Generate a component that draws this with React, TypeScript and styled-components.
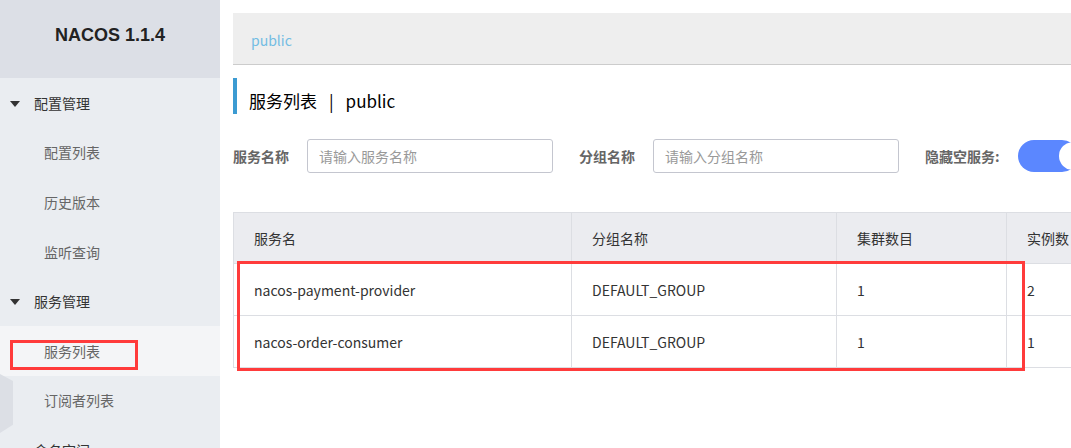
import React from "react"
import styled, { createGlobalStyle } from "styled-components"

const GlobalStyle = createGlobalStyle`
  html, body {
    margin: 0;
    padding: 0;
    background: #fff;
    font-family: "Noto Sans CJK SC", "Noto Sans", sans-serif;
    font-size: 14px;
    color: #333;
  }
  * { box-sizing: border-box; }
`

const Page = styled.div`
  display: flex;
  width: 100vw;
  height: 100vh;
  overflow: hidden;
`

const Sidebar = styled.aside`
  position: relative;
  flex: 0 0 220px;
  background: #eaedf1;
  display: flex;
  flex-direction: column;
  overflow: hidden;
`

const Brand = styled.div`
  flex-shrink: 0;
  height: 78px;
  background: #dcdfe6;
  display: flex;
  align-items: center;
  justify-content: center;
  font-family: "Liberation Sans", Arial, sans-serif;
  font-weight: bold;
  font-size: 18px;
  color: #222;
  padding-bottom: 8px;
`

const Menu = styled.ul`
  flex-shrink: 0;
  list-style: none;
  margin: 0;
  padding: 0;
`

const MenuItem = styled.li<{ $sub?: boolean; $active?: boolean }>`
  position: relative;
  height: 49.6px;
  display: flex;
  align-items: center;
  padding-left: ${(p) => (p.$sub ? "44px" : "34px")};
  font-size: 14px;
  color: ${(p) => (p.$sub ? "#666" : "#333")};
  background: ${(p) => (p.$active ? "#f4f5f7" : "transparent")};
`

const Arrow = styled.span`
  position: absolute;
  left: 10px;
  top: 50%;
  margin-top: -2px;
  width: 0;
  height: 0;
  border-left: 5px solid transparent;
  border-right: 5px solid transparent;
  border-top: 6px solid #333;
`

const Mark = styled.span`
  position: absolute;
  left: 10px;
  top: 14px;
  width: 128px;
  height: 30px;
  border: 3px solid #ff3b3b;
`

const Handle = styled.div`
  position: absolute;
  left: 0;
  top: 374px;
  width: 13px;
  height: 59px;
  background: #dcdfe5;
  clip-path: polygon(0 0, 100% 12%, 100% 86%, 0 100%);
`

const Main = styled.main`
  flex: 1;
  min-width: 0;
  overflow: hidden;
  padding: 13px 0 0 13px;
`

const Content = styled.div`
  width: 1000px;
`

const Breadcrumb = styled.div`
  height: 52px;
  background: #eeeeee;
  border-bottom: 1px solid #cccccc;
  display: flex;
  align-items: center;
  padding-left: 18px;
  padding-top: 3px;
  color: #73bde3;
  font-size: 14px;
`

const Title = styled.h1`
  margin: 13px 0 0;
  height: 36px;
  border-left: 4px solid #3c9bd2;
  padding: 10px 0 0 12px;
  font-size: 17px;
  font-weight: normal;
  line-height: 26px;
  color: #000;
  display: flex;
`

const Separator = styled.span`
  margin: 0 12px;
`

const Filters = styled.div`
  margin-top: 25px;
  display: flex;
  align-items: center;
  height: 34px;
`

const Field = styled.div`
  display: flex;
  align-items: center;
  margin-right: 26px;
`

const Label = styled.label`
  font-weight: bold;
  font-size: 14px;
  color: #666;
  margin-right: 18px;
  white-space: nowrap;
`

const Input = styled.input`
  width: 246px;
  height: 34px;
  border: 1px solid #c4c6cf;
  border-radius: 3px;
  padding: 0 11px;
  font-family: inherit;
  font-size: 14px;
  color: #333;
  outline: none;
  &::placeholder {
    color: #999;
  }
`

const Switch = styled.span`
  position: relative;
  width: 60px;
  height: 32px;
  border-radius: 16px;
  background: #5b87ff;
  &::after {
    content: "";
    position: absolute;
    top: 2px;
    left: 41px;
    width: 28px;
    height: 28px;
    border-radius: 50%;
    background: #fff;
  }
`

const TableWrap = styled.div`
  position: relative;
  margin-top: 39px;
`

const Table = styled.table`
  border-collapse: collapse;
  table-layout: fixed;
  width: 1000px;
  border: 1px solid #dcdee3;
`

const Th = styled.th<{ $w: number }>`
  width: ${(p) => p.$w}px;
  height: 51px;
  background: #ebecf0;
  border: 1px solid #dcdee3;
  text-align: left;
  padding: 0 20px;
  font-weight: normal;
  font-size: 14px;
  color: #333;
`

const Td = styled.td`
  height: 52px;
  border: 1px solid #dcdee3;
  padding: 0 20px;
  font-size: 14px;
  color: #333;
  white-space: nowrap;
`

const Highlight = styled.div`
  position: absolute;
  left: 4px;
  top: 49px;
  width: 788px;
  height: 110px;
  border: 3px solid #ff3b3b;
  pointer-events: none;
`

const menu = [
  { label: "配置管理", group: true },
  { label: "配置列表" },
  { label: "历史版本" },
  { label: "监听查询" },
  { label: "服务管理", group: true },
  { label: "服务列表", active: true },
  { label: "订阅者列表" },
  { label: "命名空间", top: true },
]

const rows = [
  { name: "nacos-payment-provider", group: "DEFAULT_GROUP", clusters: 1, instances: 2 },
  { name: "nacos-order-consumer", group: "DEFAULT_GROUP", clusters: 1, instances: 1 },
]

export default function App() {
  return (
    <Page>
      <GlobalStyle />
      <Sidebar>
        <Brand>NACOS 1.1.4</Brand>
        <Menu>
          {menu.map((m) => (
            <MenuItem key={m.label} $sub={!m.group && !m.top} $active={m.active}>
              {m.group && <Arrow />}
              {m.active && <Mark />}
              {m.label}
            </MenuItem>
          ))}
        </Menu>
        <Handle />
      </Sidebar>
      <Main>
        <Content>
          <Breadcrumb>public</Breadcrumb>
          <Title>
            服务列表<Separator>|</Separator>public
          </Title>
          <Filters>
            <Field>
              <Label>服务名称</Label>
              <Input placeholder="请输入服务名称" />
            </Field>
            <Field>
              <Label>分组名称</Label>
              <Input placeholder="请输入分组名称" />
            </Field>
            <Field>
              <Label>隐藏空服务:</Label>
              <Switch />
            </Field>
          </Filters>
          <TableWrap>
            <Table>
              <thead>
                <tr>
                  <Th $w={338}>服务名</Th>
                  <Th $w={265}>分组名称</Th>
                  <Th $w={170}>集群数目</Th>
                  <Th $w={227}>实例数</Th>
                </tr>
              </thead>
              <tbody>
                {rows.map((r) => (
                  <tr key={r.name}>
                    <Td>{r.name}</Td>
                    <Td>{r.group}</Td>
                    <Td>{r.clusters}</Td>
                    <Td>{r.instances}</Td>
                  </tr>
                ))}
              </tbody>
            </Table>
            <Highlight />
          </TableWrap>
        </Content>
      </Main>
    </Page>
  )
}
